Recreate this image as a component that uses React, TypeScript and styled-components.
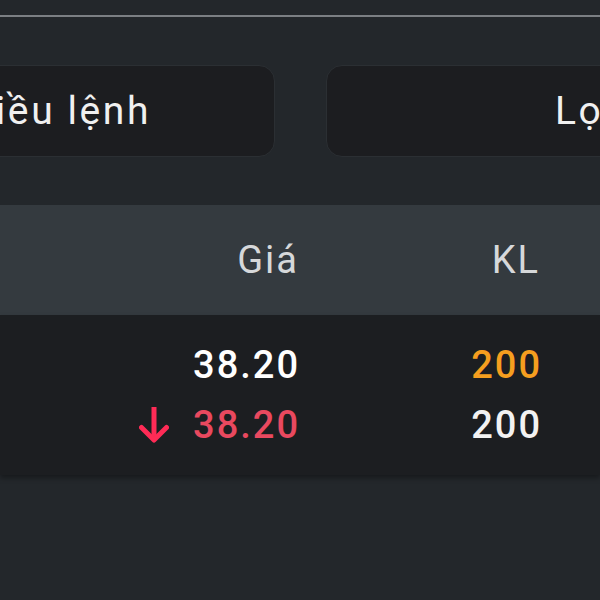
import React from 'react'
import styled, { createGlobalStyle } from 'styled-components'

const GlobalStyle = createGlobalStyle`
  html, body {
    margin: 0;
    padding: 0;
    background: #23272b;
  }
  body {
    font-family: Roboto, "Noto Sans", sans-serif;
  }
`

const Screen = styled.div`
  width: 600px;
  height: 600px;
  overflow: hidden;
  background: #23272b;
  padding-top: 15px;
  box-sizing: border-box;
`

const Divider = styled.div`
  height: 2px;
  background: #7b7f83;
`

const FilterRow = styled.div`
  display: grid;
  grid-template-columns: 400px 400px;
  column-gap: 51px;
  margin: 48px 0 0 -125px;
`

interface FilterBoxProps {
  $inset: number
}
const FilterBox = styled.div<FilterBoxProps>`
  height: 92px;
  box-sizing: border-box;
  display: flex;
  align-items: center;
  padding-left: ${p => p.$inset}px;
  border-radius: 16px;
  background: #1c1d20;
  border: 1.5px solid #2b2f33;
  color: #f0f0f0;
  font-size: 39px;
  letter-spacing: 2.6px;
  white-space: nowrap;
`

const TableHead = styled.div`
  margin-top: 48px;
  height: 110px;
  background: #343a3f;
  display: grid;
  grid-template-columns: 299px 241px 1fr;
  align-items: center;
  color: #d6d8da;
  font-size: 38px;
`

const HeadCell = styled.div`
  text-align: right;
  letter-spacing: 2px;
`

const TableBody = styled.div`
  background: #1c1e21;
  padding: 20px 0;
  box-shadow: 0 3px 5px rgba(0, 0, 0, 0.35);
  position: relative;
`

const Row = styled.div`
  display: grid;
  grid-template-columns: 300px 242px 1fr;
  height: 60px;
  align-items: center;
  font-size: 38px;
  font-weight: 500;
  letter-spacing: 2px;
`

interface ValueProps {
  $color: string
}
const Value = styled.div<ValueProps>`
  display: flex;
  align-items: center;
  justify-content: flex-end;
  gap: 24px;
  color: ${p => p.$color};
`

const ArrowDown = () => (
  <svg width="30" height="38" viewBox="0 0 30 38">
    <path d="M15 1v32" stroke="#ff2b56" strokeWidth="5" fill="none" />
    <path d="M2.5 21.5 15 34 27.5 21.5" stroke="#ff2b56" strokeWidth="5" fill="none" strokeLinejoin="round" strokeLinecap="round" />
  </svg>
)

const rows = [
  { price: '38.20', priceColor: '#ffffff', vol: '200', volColor: '#f59e1f', down: false },
  { price: '38.20', priceColor: '#e9495f', vol: '200', volColor: '#f2f2f2', down: true },
]

const App = () => (
  <Screen>
    <GlobalStyle />
    <Divider />
    <FilterRow>
      <FilterBox $inset={91}>Điều lệnh</FilterBox>
      <FilterBox $inset={228}>Lọc</FilterBox>
    </FilterRow>
    <TableHead>
      <HeadCell>Giá</HeadCell>
      <HeadCell>KL</HeadCell>
    </TableHead>
    <TableBody>
      {rows.map((r, i) => (
        <Row key={i}>
          <Value $color={r.priceColor}>
            {r.down && <ArrowDown />}
            <span>{r.price}</span>
          </Value>
          <Value $color={r.volColor}>{r.vol}</Value>
        </Row>
      ))}
    </TableBody>
  </Screen>
)

export default App
